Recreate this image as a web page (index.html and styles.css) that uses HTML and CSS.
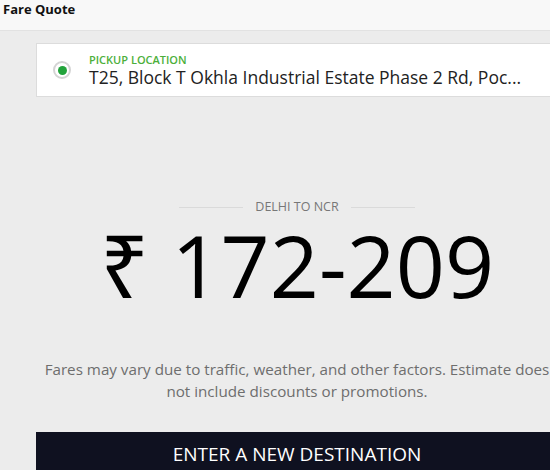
FILE: index.html
```html
<!DOCTYPE html>
<html lang="en">
<head>
    <meta charset="UTF-8">
    <meta name="viewport" content="width=device-width, initial-scale=1.0">
    <title>Fare Quote</title>
    <link rel="stylesheet" href="styles.css">
</head>
<body>

    <header class="titlebar">Fare Quote</header>

    <main class="content">
        <div class="pickup">
            <span class="radio"><span class="radio-dot"></span></span>
            <div class="pickup-text">
                <div class="pickup-label">PICKUP LOCATION</div>
                <div class="pickup-address">T25, Block T Okhla Industrial Estate Phase 2 Rd, Poc...</div>
            </div>
        </div>

        <div class="route">
            <span class="route-line"></span>
            <span class="route-name">DELHI TO NCR</span>
            <span class="route-line"></span>
        </div>

        <div class="price">₹ 172-209</div>

        <p class="note">Fares may vary due to traffic, weather, and other factors. Estimate does not include discounts or promotions.</p>

        <button class="dest-button">ENTER A NEW DESTINATION</button>
    </main>

</body>
</html>
```

FILE: styles.css
```css
body {
    margin: 0;
    font-family: "Open Sans", "Noto Sans", sans-serif;
    background-color: #ececec;
    overflow: hidden;
    height: 470px;
}
.titlebar {
    height: 30px;
    background-color: #f8f8f8;
    border-bottom: 1px solid #e2e2e2;
    padding: 0 3px;
    font-weight: bold;
    font-size: 13px;
    line-height: 19px;
    color: #111;
}
.content {
    width: 522px;
    margin-left: 36px;
    padding-top: 12px;
}
.pickup {
    display: flex;
    align-items: center;
    gap: 18px;
    height: 52px;
    background-color: #fff;
    border: 1px solid #dcdcdc;
    padding-left: 16px;
}
.radio {
    width: 18px;
    height: 18px;
    border: 2px solid #d4d4d4;
    border-radius: 50%;
    display: flex;
    align-items: center;
    justify-content: center;
    box-sizing: border-box;
}
.radio-dot {
    width: 9px;
    height: 9px;
    border-radius: 50%;
    background-color: #22a33b;
}
.pickup-label {
    color: #4caf3a;
    font-size: 11px;
    font-weight: 600;
    line-height: 14px;
}
.pickup-address {
    color: #222;
    font-size: 17.5px;
    line-height: 21px;
    white-space: nowrap;
}
.route {
    display: flex;
    align-items: center;
    justify-content: center;
    gap: 12px;
    margin-top: 102px;
}
.route-line {
    width: 64px;
    height: 1px;
    background-color: #dadada;
}
.route-name {
    color: #777;
    font-size: 12.5px;
    line-height: 16px;
}
.price {
    text-align: center;
    font-size: 86px;
    line-height: 90px;
    color: #000;
    margin-top: 5px;
}
.note {
    text-align: center;
    color: #6e6e6e;
    font-size: 15.2px;
    line-height: 22px;
    margin: 48px 0 0 0;
}
.dest-button {
    display: block;
    width: 100%;
    height: 50px;
    margin-top: 30px;
    border: none;
    background-color: #0f1120;
    color: #fff;
    font-family: inherit;
    font-size: 19px;
    padding-top: 0;
    padding-bottom: 6px;
}
```
